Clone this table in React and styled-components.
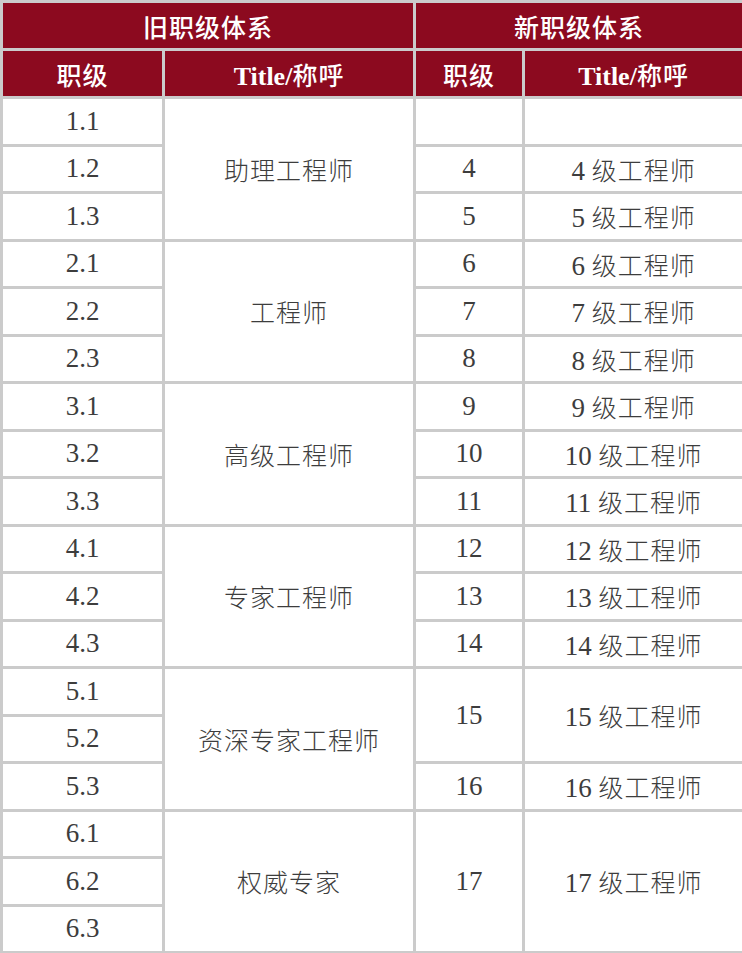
import React from "react";
import styled, { createGlobalStyle } from "styled-components";

const GlobalStyle = createGlobalStyle`
  html, body {
    margin: 0;
    padding: 0;
    background: #ffffff;
  }
`;

const Table = styled.table`
  width: 742px;
  table-layout: fixed;
  border-collapse: collapse;
  font-family: "Liberation Serif", "Noto Sans CJK SC", serif;
  color: #3d3d3d;
`;

const HeadRow = styled.tr`
  height: 48px;
`;

const BodyRow = styled.tr`
  height: 47.5px;
`;

const Th = styled.th`
  background-color: #8c0a1f;
  color: #ffffff;
  border: 3px solid #cbcbcb;
  font-size: 26px;
  font-weight: 700;
  text-align: center;
  vertical-align: middle;
  padding: 0;
`;

const Td = styled.td`
  border: 3px solid #cbcbcb;
  font-size: 27px;
  font-weight: 400;
  text-align: center;
  vertical-align: middle;
  padding: 0;
`;

const Cn = styled.span`
  font-family: "Noto Sans CJK SC", sans-serif;
  font-weight: ${(props) => (props.bold ? 500 : 300)};
  font-size: 25px;
  letter-spacing: 1px;
`;

const oldRows = [
  { title: "助理工程师", levels: ["1.1", "1.2", "1.3"] },
  { title: "工程师", levels: ["2.1", "2.2", "2.3"] },
  { title: "高级工程师", levels: ["3.1", "3.2", "3.3"] },
  { title: "专家工程师", levels: ["4.1", "4.2", "4.3"] },
  { title: "资深专家工程师", levels: ["5.1", "5.2", "5.3"] },
  { title: "权威专家", levels: ["6.1", "6.2", "6.3"] },
];

// new system cells: keyed by body row index, with rowSpan
const newCells = {
  0: { level: "", span: 1 },
  1: { level: "4", span: 1 },
  2: { level: "5", span: 1 },
  3: { level: "6", span: 1 },
  4: { level: "7", span: 1 },
  5: { level: "8", span: 1 },
  6: { level: "9", span: 1 },
  7: { level: "10", span: 1 },
  8: { level: "11", span: 1 },
  9: { level: "12", span: 1 },
  10: { level: "13", span: 1 },
  11: { level: "14", span: 1 },
  12: { level: "15", span: 2 },
  14: { level: "16", span: 1 },
  15: { level: "17", span: 3 },
};

function NewTitle({ level }) {
  if (!level) return null;
  return (
    <>
      {level} <Cn>级工程师</Cn>
    </>
  );
}

export default function App() {
  const rows = [];
  oldRows.forEach((group, g) => {
    group.levels.forEach((lv, i) => {
      const idx = g * 3 + i;
      const nc = newCells[idx];
      rows.push(
        <BodyRow key={lv}>
          <Td>{lv}</Td>
          {i === 0 && (
            <Td rowSpan={3}>
              <Cn>{group.title}</Cn>
            </Td>
          )}
          {nc && <Td rowSpan={nc.span}>{nc.level}</Td>}
          {nc && (
            <Td rowSpan={nc.span}>
              <NewTitle level={nc.level} />
            </Td>
          )}
        </BodyRow>
      );
    });
  });

  return (
    <>
      <GlobalStyle />
      <Table>
        <colgroup>
          <col style={{ width: "162px" }} />
          <col style={{ width: "251px" }} />
          <col style={{ width: "109px" }} />
          <col style={{ width: "220px" }} />
        </colgroup>
        <thead>
          <HeadRow>
            <Th colSpan={2}>
              <Cn bold>旧职级体系</Cn>
            </Th>
            <Th colSpan={2}>
              <Cn bold>新职级体系</Cn>
            </Th>
          </HeadRow>
          <HeadRow>
            <Th>
              <Cn bold>职级</Cn>
            </Th>
            <Th>
              Title/<Cn bold>称呼</Cn>
            </Th>
            <Th>
              <Cn bold>职级</Cn>
            </Th>
            <Th>
              Title/<Cn bold>称呼</Cn>
            </Th>
          </HeadRow>
        </thead>
        <tbody>{rows}</tbody>
      </Table>
    </>
  );
}
